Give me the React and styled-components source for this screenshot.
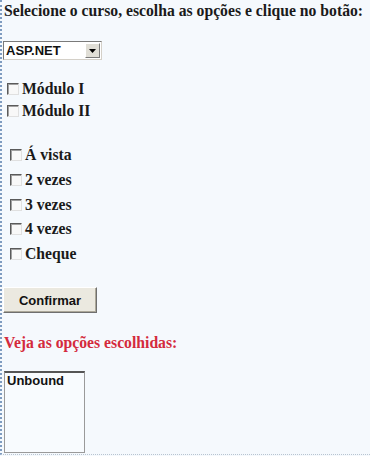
import React from "react";
import styled, { createGlobalStyle } from "styled-components";

const Global = createGlobalStyle`
  html, body { margin: 0; padding: 0; background: #f5f9fd; }
  #root { width: 370px; height: 456px; }
`;

const Page = styled.div`
  box-sizing: border-box;
  width: 370px;
  height: 455px;
  overflow: hidden;
  border-left: 2px dotted #7f9cc0;
  border-bottom: 1px dotted #b8c4d0;
  padding: 2px 0 0 2px;
  font-family: "Liberation Serif", "Times New Roman", serif;
  font-size: 15.7px;
  font-weight: bold;
  color: #1a1a1a;
`;

const Heading = styled.div`
  line-height: 18px;
  white-space: nowrap;
`;

const Select = styled.div`
  margin-top: 21px;
  margin-left: -1px;
  box-sizing: border-box;
  width: 99px;
  height: 19px;
  border: 1px solid;
  border-color: #7a7a7a #d4d0c8 #d4d0c8 #7a7a7a;
  background: #fff;
  display: flex;
  align-items: center;
  font-family: "Liberation Sans", Arial, sans-serif;
  font-size: 13px;
  color: #111;
  padding-left: 2px;
`;

const SelectText = styled.span`
  flex: 1;
`;

const Arrow = styled.span`
  width: 15px;
  height: 15px;
  box-sizing: border-box;
  margin-right: 1px;
  background: #e0ded6;
  border: 1px solid;
  border-color: #fff #7a7a7a #7a7a7a #fff;
  display: flex;
  align-items: center;
  justify-content: center;
`;

const Group = styled.div`
  display: flex;
  flex-direction: column;
  gap: ${(p) => p.$gap}px;
  margin-top: ${(p) => p.$top}px;
  padding-left: ${(p) => p.$indent}px;
`;

const Row = styled.label`
  display: flex;
  align-items: center;
  height: 18px;
  line-height: 18px;
`;

const Box = styled.span`
  box-sizing: border-box;
  width: 12px;
  height: 12px;
  margin-right: 3px;
  border: 1px solid;
  border-color: #5a5a5a #e0e0e0 #e0e0e0 #5a5a5a;
  background: #f8f8f8;
  box-shadow: inset 1px 1px 0 #a0a0a0;
`;

const Button = styled.button`
  display: block;
  margin-top: 24px;
  margin-left: -1px;
  box-sizing: border-box;
  width: 94px;
  height: 26px;
  background: #ebe9e0;
  border: 1px solid;
  border-color: #fff #6f6f6f #6f6f6f #fff;
  box-shadow: inset -1px -1px 0 #aca899;
  font-family: "Liberation Sans", Arial, sans-serif;
  font-weight: bold;
  font-size: 13px;
  color: #111;
  padding: 0;
`;

const Notice = styled.div`
  margin-top: 21px;
  color: #d42a3c;
  line-height: 18px;
`;

const ListBox = styled.div`
  margin-top: 19px;
  box-sizing: border-box;
  width: 81px;
  height: 82px;
  border: 1px solid #9a9a9a;
  border-top: 2px solid #555;
  background: #f8fbfe;
  font-family: "Liberation Sans", Arial, sans-serif;
  font-size: 13px;
  line-height: 15px;
  color: #111;
  padding: 0 2px;
`;

const moduleItems = ["Módulo I", "Módulo II"];
const payItems = ["Á vista", "2 vezes", "3 vezes", "4 vezes", "Cheque"];

export default function App() {
  return (
    <>
      <Global />
      <Page>
        <Heading>Selecione o curso, escolha as opções e clique no botão:</Heading>
        <Select>
          <SelectText>ASP.NET</SelectText>
          <Arrow>
            <svg width="7" height="4" viewBox="0 0 7 4">
              <path d="M0 0H7L3.5 4Z" fill="#000" />
            </svg>
          </Arrow>
        </Select>
        <Group $top={20} $gap={4} $indent={3}>
          {moduleItems.map((t) => (
            <Row key={t}>
              <Box />
              {t}
            </Row>
          ))}
        </Group>
        <Group $top={26} $gap={6.75} $indent={6}>
          {payItems.map((t) => (
            <Row key={t}>
              <Box />
              {t}
            </Row>
          ))}
        </Group>
        <Button>Confirmar</Button>
        <Notice>Veja as opções escolhidas:</Notice>
        <ListBox>Unbound</ListBox>
      </Page>
    </>
  );
}
